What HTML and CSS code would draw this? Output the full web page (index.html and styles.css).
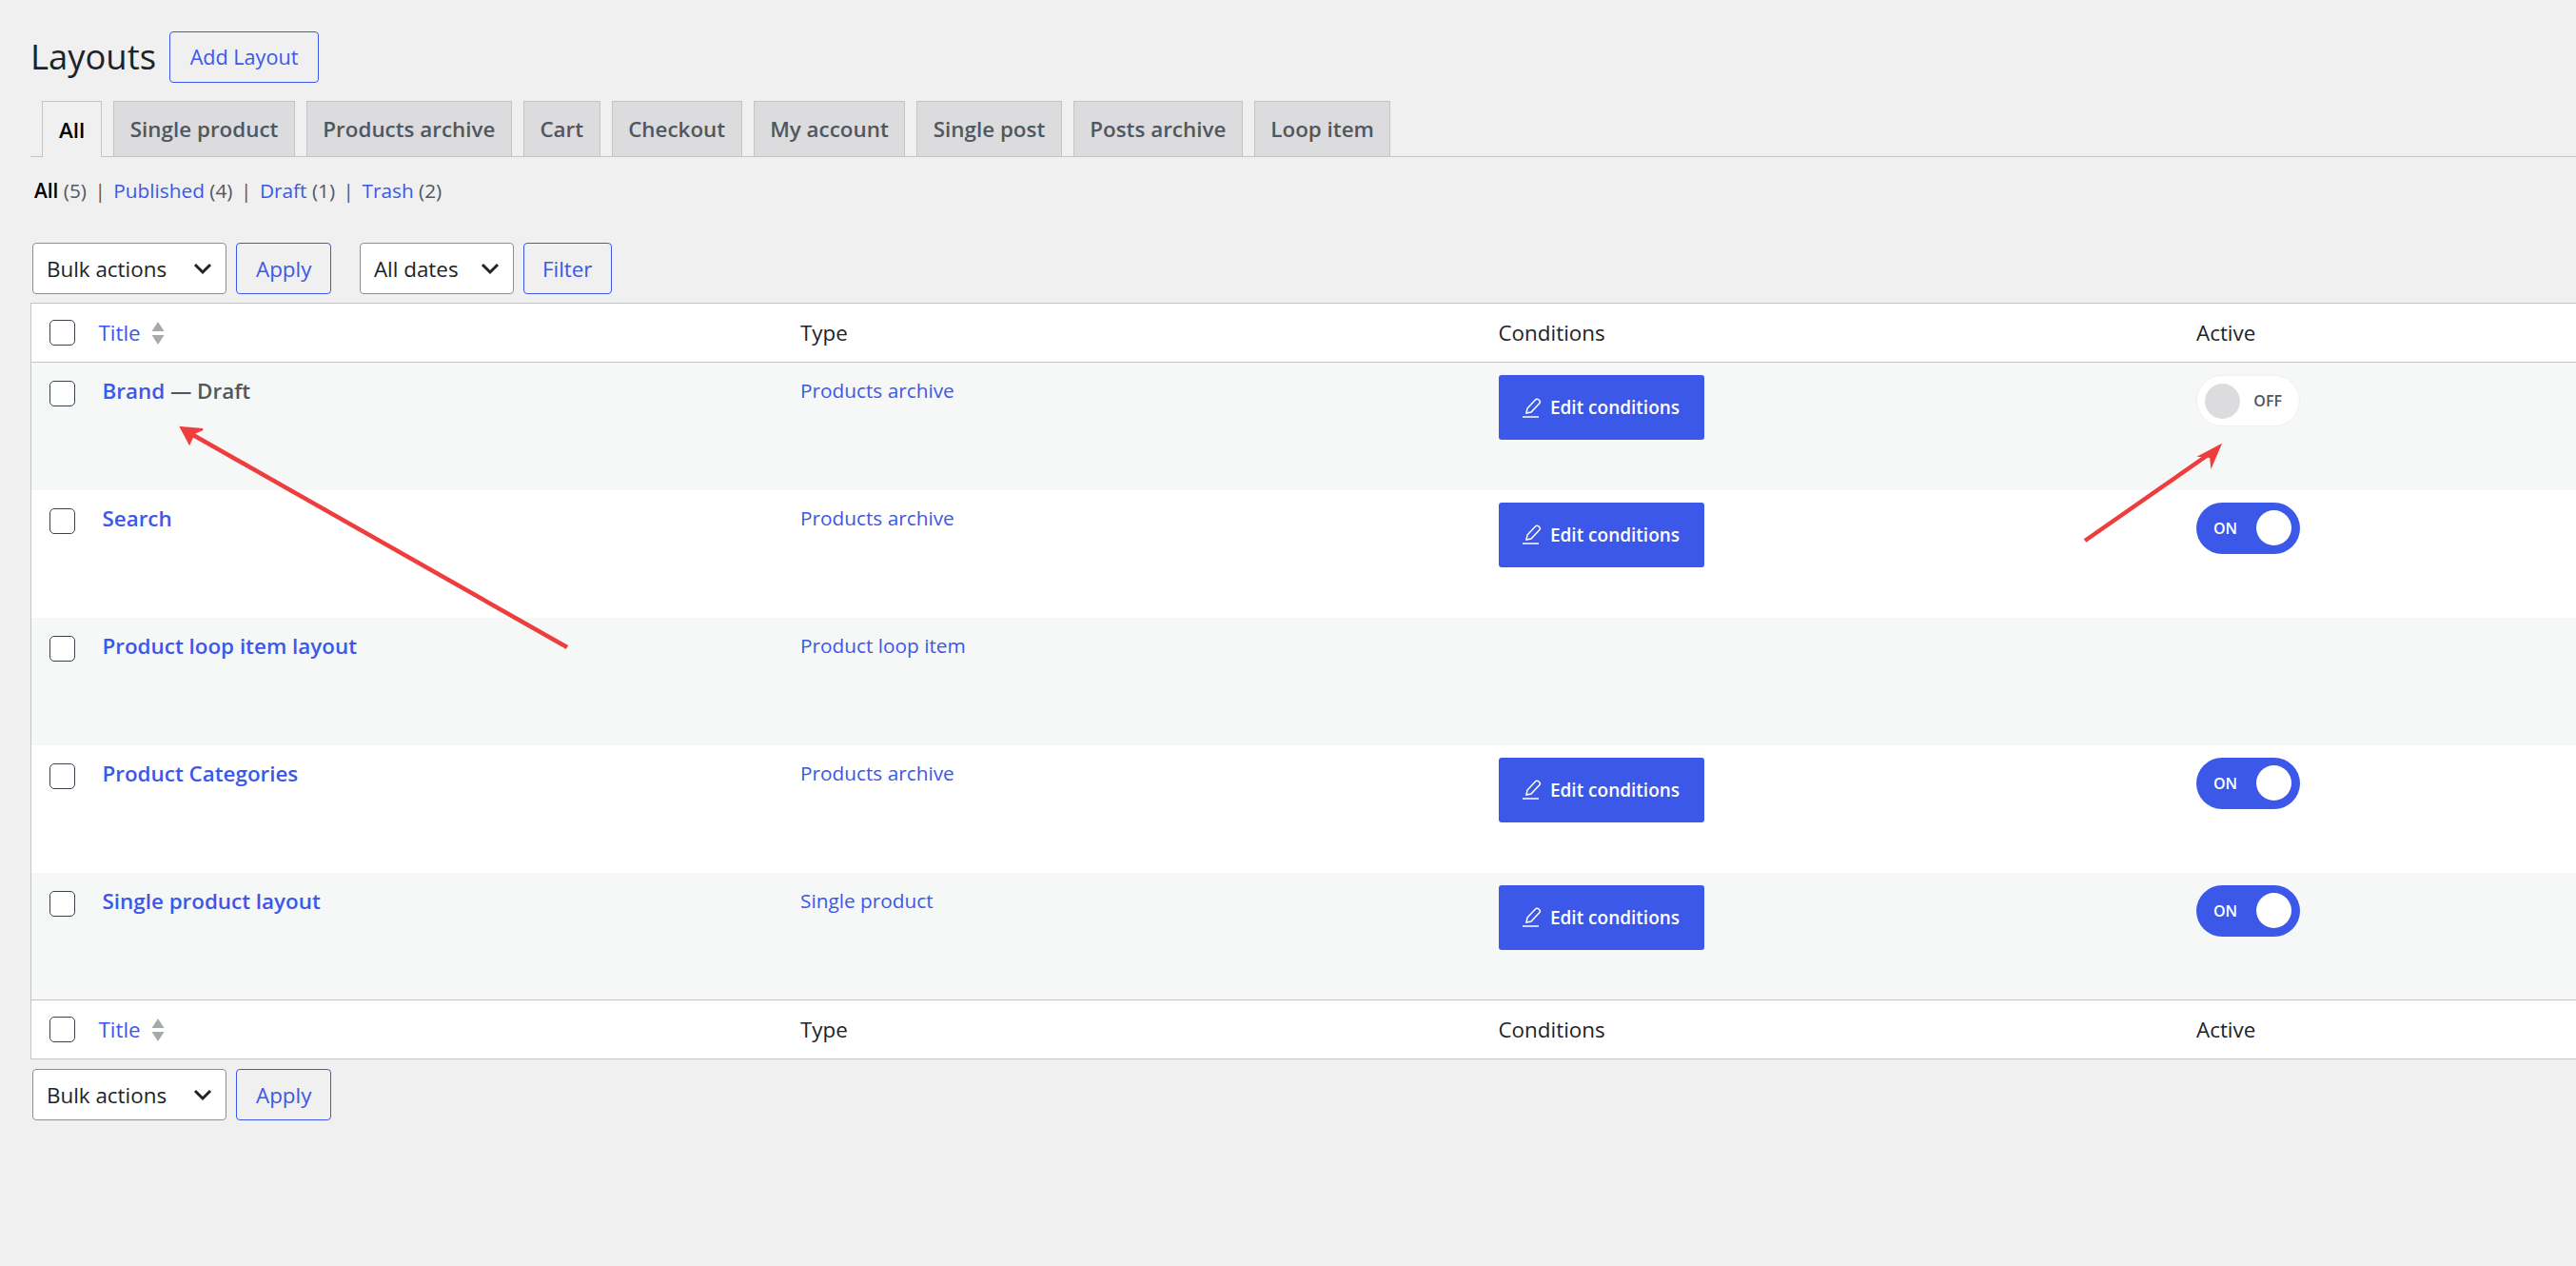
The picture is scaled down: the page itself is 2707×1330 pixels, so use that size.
FILE: index.html
```html
<!DOCTYPE html>
<html lang="en">
<head>
    <meta charset="UTF-8">
    <meta name="viewport" content="width=device-width, initial-scale=1.0">
    <title>Layouts</title>
    <link rel="stylesheet" href="styles.css">
</head>
<body>
    <div class="wrap">
        <div class="page-head">
            <h1>Layouts</h1>
            <a href="#" class="btn">Add Layout</a>
        </div>
        <div class="tabs">
            <a href="#" class="tab active">All</a>
            <a href="#" class="tab">Single product</a>
            <a href="#" class="tab">Products archive</a>
            <a href="#" class="tab">Cart</a>
            <a href="#" class="tab">Checkout</a>
            <a href="#" class="tab">My account</a>
            <a href="#" class="tab">Single post</a>
            <a href="#" class="tab">Posts archive</a>
            <a href="#" class="tab">Loop item</a>
        </div>
        <ul class="subsub">
            <li><a href="#" class="current">All</a> (5)</li>
            <li><a href="#">Published</a> (4)</li>
            <li><a href="#">Draft</a> (1)</li>
            <li><a href="#">Trash</a> (2)</li>
        </ul>
        <div class="toolbar">
            <select class="select bulk"><option>Bulk actions</option></select>
            <a href="#" class="btn">Apply</a>
            <select class="select dates"><option>All dates</option></select>
            <a href="#" class="btn filter">Filter</a>
        </div>
        <table class="list">
            <thead>
                <tr>
                    <th class="check"><input type="checkbox" class="cb"></th>
                    <th class="title-head col"><a href="#">Title</a>
                        <svg class="sort" width="16" height="26" viewBox="0 0 16 26"><path d="M8 1l6.500 10h-13z M1.500 15h13L8 25z" fill="#a7aaad"/></svg>
                    </th>
                    <th class="col">Type</th>
                    <th class="col">Conditions</th>
                    <th>Active</th>
                </tr>
            </thead>
            <tbody>
                <tr>
                    <td class="check"><input type="checkbox" class="cb"></td>
                    <td class="name"><a href="#">Brand</a> <span class="state">— Draft</span></td>
                    <td><a href="#">Products archive</a></td>
                    <td><a href="#" class="edit"><svg class="pen" width="20" height="21" viewBox="0 0 20 21"><path d="M4 16L5 11 13.500 2a2.200 2.200 0 0 1 3.200-.2l1 1a2.200 2.200 0 0 1 0 3L9 15z" fill="none" stroke="#fff" stroke-width="1.500"/><path d="M0 20h17" stroke="#fff" stroke-width="1.500"/></svg>Edit conditions</a></td>
                    <td><span class="toggle off"><i class="knob"></i><b>OFF</b></span></td>
                </tr>
                <tr>
                    <td class="check"><input type="checkbox" class="cb"></td>
                    <td class="name"><a href="#">Search</a></td>
                    <td><a href="#">Products archive</a></td>
                    <td><a href="#" class="edit"><svg class="pen" width="20" height="21" viewBox="0 0 20 21"><path d="M4 16L5 11 13.500 2a2.200 2.200 0 0 1 3.200-.2l1 1a2.200 2.200 0 0 1 0 3L9 15z" fill="none" stroke="#fff" stroke-width="1.500"/><path d="M0 20h17" stroke="#fff" stroke-width="1.500"/></svg>Edit conditions</a></td>
                    <td><span class="toggle on"><b>ON</b><i class="knob"></i></span></td>
                </tr>
                <tr>
                    <td class="check"><input type="checkbox" class="cb"></td>
                    <td class="name"><a href="#">Product loop item layout</a></td>
                    <td><a href="#">Product loop item</a></td>
                    <td></td>
                    <td></td>
                </tr>
                <tr>
                    <td class="check"><input type="checkbox" class="cb"></td>
                    <td class="name"><a href="#">Product Categories</a></td>
                    <td><a href="#">Products archive</a></td>
                    <td><a href="#" class="edit"><svg class="pen" width="20" height="21" viewBox="0 0 20 21"><path d="M4 16L5 11 13.500 2a2.200 2.200 0 0 1 3.200-.2l1 1a2.200 2.200 0 0 1 0 3L9 15z" fill="none" stroke="#fff" stroke-width="1.500"/><path d="M0 20h17" stroke="#fff" stroke-width="1.500"/></svg>Edit conditions</a></td>
                    <td><span class="toggle on"><b>ON</b><i class="knob"></i></span></td>
                </tr>
                <tr>
                    <td class="check"><input type="checkbox" class="cb"></td>
                    <td class="name"><a href="#">Single product layout</a></td>
                    <td><a href="#">Single product</a></td>
                    <td><a href="#" class="edit"><svg class="pen" width="20" height="21" viewBox="0 0 20 21"><path d="M4 16L5 11 13.500 2a2.200 2.200 0 0 1 3.200-.2l1 1a2.200 2.200 0 0 1 0 3L9 15z" fill="none" stroke="#fff" stroke-width="1.500"/><path d="M0 20h17" stroke="#fff" stroke-width="1.500"/></svg>Edit conditions</a></td>
                    <td><span class="toggle on"><b>ON</b><i class="knob"></i></span></td>
                </tr>
            </tbody>
            <tfoot>
                <tr>
                    <th class="check"><input type="checkbox" class="cb"></th>
                    <th class="title-head"><a href="#">Title</a>
                        <svg class="sort" width="16" height="26" viewBox="0 0 16 26"><path d="M8 1l6.500 10h-13z M1.500 15h13L8 25z" fill="#a7aaad"/></svg>
                    </th>
                    <th>Type</th>
                    <th>Conditions</th>
                    <th>Active</th>
                </tr>
            </tfoot>
        </table>
        <div class="toolbar bottom">
            <select class="select bulk"><option>Bulk actions</option></select>
            <a href="#" class="btn">Apply</a>
        </div>
    </div>
    <!-- annotation arrows drawn over the screenshot -->
    <svg class="arrows" width="2707" height="1330" viewBox="0 0 2707 1330">
        <path d="M596 680L203 457" stroke="#ee3d3d" stroke-width="4.500" fill="none"/>
        <path d="M190 449l23 2-9 4-5 11z" fill="#ee3d3d" stroke="#ee3d3d" stroke-width="2"/>
        <path d="M2191 568L2323 476" stroke="#ee3d3d" stroke-width="4.500" fill="none"/>
        <path d="M2333 468l-9 21-1-9-11-1z" fill="#ee3d3d" stroke="#ee3d3d" stroke-width="2"/>
    </svg>
</body>
</html>
```
FILE: styles.css
```css
* {
    box-sizing: border-box;
}
html, body {
    margin: 0;
    height: 100%;
    overflow: hidden;
}
body {
    font-family: 'Open Sans', 'Noto Sans', Arial, sans-serif;
    font-size: 20.800px;
    background-color: #f0f0f0;
    color: #3c434a;
    position: relative;
}
a {
    color: #3b58e9;
    text-decoration: none;
}
.wrap {
    padding: 33px 0 0 32px;
}
.page-head {
    display: flex;
    align-items: center;
    height: 54px;
    gap: 14px;
}
h1 {
    margin: 0;
    padding-bottom: 3px;
    font-size: 36.400px;
    font-weight: 400;
    color: #1d2327;
}
.btn {
    display: flex;
    align-items: center;
    justify-content: center;
    height: 54px;
    padding: 0 20px;
    border: 1.500px solid #3b58e9;
    border-radius: 4px;
    font-size: 22.400px;
    font-weight: 400;
}
.btn.filter {
    padding: 0 19px;
}
.page-head .btn {
    width: 157px;
    padding-bottom: 2px;
    font-size: 21.600px;
}
.tabs {
    display: flex;
    gap: 12px;
    margin-top: 19px;
    height: 59px;
    padding-left: 12px;
    border-bottom: 1.500px solid #c3c4c7;
}
.tab {
    display: flex;
    align-items: center;
    padding: 0 16.500px;
    height: 58px;
    background-color: #dcdcde;
    border: 1.500px solid #c3c4c7;
    border-bottom: none;
    color: #50575e;
    font-size: 22.400px;
    font-weight: 600;
}
.tab.active {
    height: 59px;
    padding: 0 17px;
    background-color: #f0f0f0;
    color: #000;
}
.subsub {
    display: flex;
    list-style: none;
    margin: 21px 0 0 4px;
    padding: 0;
    height: 32px;
    color: #50575e;
}
.subsub li + li::before {
    content: "|";
    margin: 0 8.500px;
    color: #50575e;
}
.subsub .current {
    color: #000;
    font-weight: 600;
}
.toolbar {
    display: flex;
    gap: 10px;
    margin: 37px 0 0 2px;
}
.toolbar.bottom {
    margin-top: 10px;
}
.select {
    appearance: none;
    height: 54px;
    font-family: inherit;
    font-size: 22.400px;
    color: #1d2327;
    padding: 0 14px;
    border: 1.500px solid #8c8f94;
    border-radius: 4px;
    background: #fff url("data:image/svg+xml,%3Csvg xmlns='http://www.w3.org/2000/svg' width='20' height='14' viewBox='0 0 20 14'%3E%3Cpath d='M2 3l8 8 8-8' fill='none' stroke='%231d2327' stroke-width='3'/%3E%3C/svg%3E") no-repeat right 14px center;
}
.select.bulk {
    width: 204px;
}
.select.dates {
    width: 162px;
    margin-left: 19.500px;
}
.list {
    border-collapse: collapse;
    table-layout: fixed;
    width: 100%;
    margin-top: 9px;
    background-color: #fff;
    border-left: 1.500px solid #c3c4c7;
}
.list th, .list td {
    padding: 0 0 0 16px;
    text-align: left;
    font-weight: 400;
    vertical-align: top;
}
.list th {
    height: 62px;
    vertical-align: middle;
    color: #1d2327;
    font-size: 22.400px;
}
.list .col {
    width: 733.500px;
}
.list thead tr, .list tfoot tr {
    border-top: 1.500px solid #c3c4c7;
    border-bottom: 1.500px solid #c3c4c7;
}
.list td {
    height: 134px;
    padding-top: 15px;
    font-size: 20.800px;
}
.list tbody tr:nth-child(odd) {
    background-color: #f6f7f7;
}
.list .check {
    width: 59px;
    padding-left: 19px;
}
.list td.check {
    padding-top: 19px;
}
.list th.title-head {
    padding-left: 12px;
}
.title-head a {
    margin-right: 4px;
}
.sort {
    vertical-align: middle;
    margin-top: -4px;
}
.cb {
    appearance: none;
    display: block;
    width: 27px;
    height: 27px;
    margin: 0;
    background-color: #fff;
    border: 1.500px solid #3c434a;
    border-radius: 5px;
}
.list td.name {
    font-size: 22.400px;
    font-weight: 600;
    padding-top: 14px;
}
.state {
    color: #50575e;
}
.edit {
    display: flex;
    align-items: center;
    justify-content: center;
    gap: 9px;
    width: 216px;
    height: 68px;
    margin-top: -2px;
    background-color: #3b58e9;
    color: #fff;
    border-radius: 3px;
    font-size: 19px;
    font-weight: 600;
}
.toggle {
    display: flex;
    align-items: center;
    justify-content: space-between;
    width: 109px;
    height: 54px;
    margin-top: -2px;
    border-radius: 27px;
    font-size: 16px;
}
.toggle b {
    font-weight: 600;
}
.toggle .knob {
    display: block;
    width: 37px;
    height: 37px;
    border-radius: 50%;
}
.toggle.on {
    background-color: #3b58e9;
    color: #fff;
    padding: 0 9px 0 18px;
}
.toggle.on .knob {
    background-color: #fff;
}
.toggle.off {
    background-color: #fff;
    border: 1px solid #f0f0f1;
    color: #50575e;
    padding: 0 18px 0 8px;
}
.toggle.off .knob {
    background-color: #dcdcde;
}
.arrows {
    position: absolute;
    top: 0;
    left: 0;
    pointer-events: none;
}
```
